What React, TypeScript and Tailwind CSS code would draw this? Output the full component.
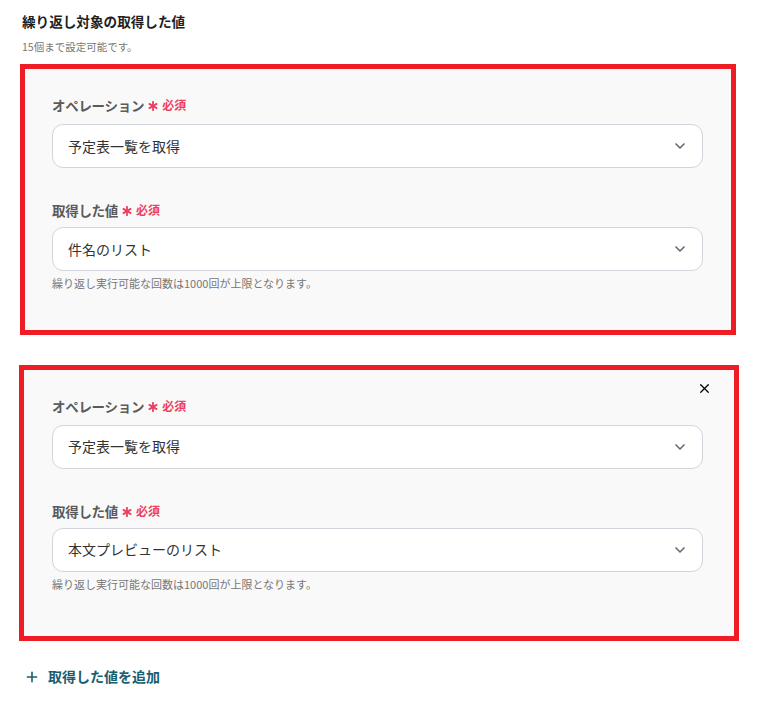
import { ChevronDown, X, Plus } from "lucide-react";

const font = { fontFamily: '"Noto Sans CJK JP", "Noto Sans", sans-serif' };

function Asterisk() {
  return (
    <svg width="10" height="10" viewBox="0 0 10 10" className="mt-[2px]">
      <g stroke="#ec3f5f" strokeWidth="1.8" strokeLinecap="round">
        <line x1="5" y1="0.8" x2="5" y2="9.2" />
        <line x1="1.4" y1="2.9" x2="8.6" y2="7.1" />
        <line x1="1.4" y1="7.1" x2="8.6" y2="2.9" />
      </g>
    </svg>
  );
}

function Label({ text }: { text: string }) {
  return (
    <div className="flex items-center gap-[4px] h-5">
      <span className="text-[13.5px] font-bold text-[#5b5b5b] tracking-[-0.3px]">{text}</span>
      <Asterisk />
      <span className="text-[12px] font-bold text-[#ec3f5f]">必須</span>
    </div>
  );
}

function Select({ value }: { value: string }) {
  return (
    <div className="flex items-center justify-between h-[44px] rounded-[11px] border border-[#d3d5dc] bg-white pl-[15px] pr-[14px]">
      <span className="text-[14px] text-[#333]">{value}</span>
      <ChevronDown size={16} strokeWidth={2.5} className="text-[#6b6b6b]" />
    </div>
  );
}

function Block({ value, removable }: { value: string; removable?: boolean }) {
  return (
    <div className={removable ? "border-[5px] border-[#ee1c25] -ml-[1px] -mr-[3px]" : "border-[5px] border-[#ee1c25]"}>
      <div
        className={
          removable
            ? "relative bg-[#f9f9f9] pl-[28px] pr-[31px] pt-[26px] pb-[44px]"
            : "relative bg-[#f9f9f9] pl-[27px] pr-[28px] pt-[26px] pb-[38px]"
        }
      >
        {removable && (
          <button className="absolute right-[22px] top-[11px] text-black">
            <X size={15} strokeWidth={2} />
          </button>
        )}
        <Label text="オペレーション" />
        <div className="mt-[9px]">
          <Select value="予定表一覧を取得" />
        </div>
        <div className="mt-[32px]">
          <Label text="取得した値" />
        </div>
        <div className="mt-[7px]">
          <Select value={value} />
        </div>
        <p className="mt-[4px] text-[11px] text-[#777]">繰り返し実行可能な回数は1000回が上限となります。</p>
      </div>
    </div>
  );
}

export default function App() {
  return (
    <div className="min-h-screen bg-white pl-[20px] pr-[36px] pt-[11px]" style={font}>
      <h2 className="pl-[2px] text-[13.6px] font-bold text-[#1f1f1f]">繰り返し対象の取得した値</h2>
      <p className="pl-[2px] mt-[8px] text-[10.5px] text-[#777]">15個まで設定可能です。</p>
      <div className="mt-[9px] flex flex-col gap-[30px]">
        <Block value="件名のリスト" />
        <Block value="本文プレビューのリスト" removable />
      </div>
      <button className="mt-[25px] ml-[4px] flex items-center gap-[8px] text-[#1b5d70]">
        <Plus size={16} strokeWidth={2.4} />
        <span className="text-[14px] font-bold">取得した値を追加</span>
      </button>
    </div>
  );
}
